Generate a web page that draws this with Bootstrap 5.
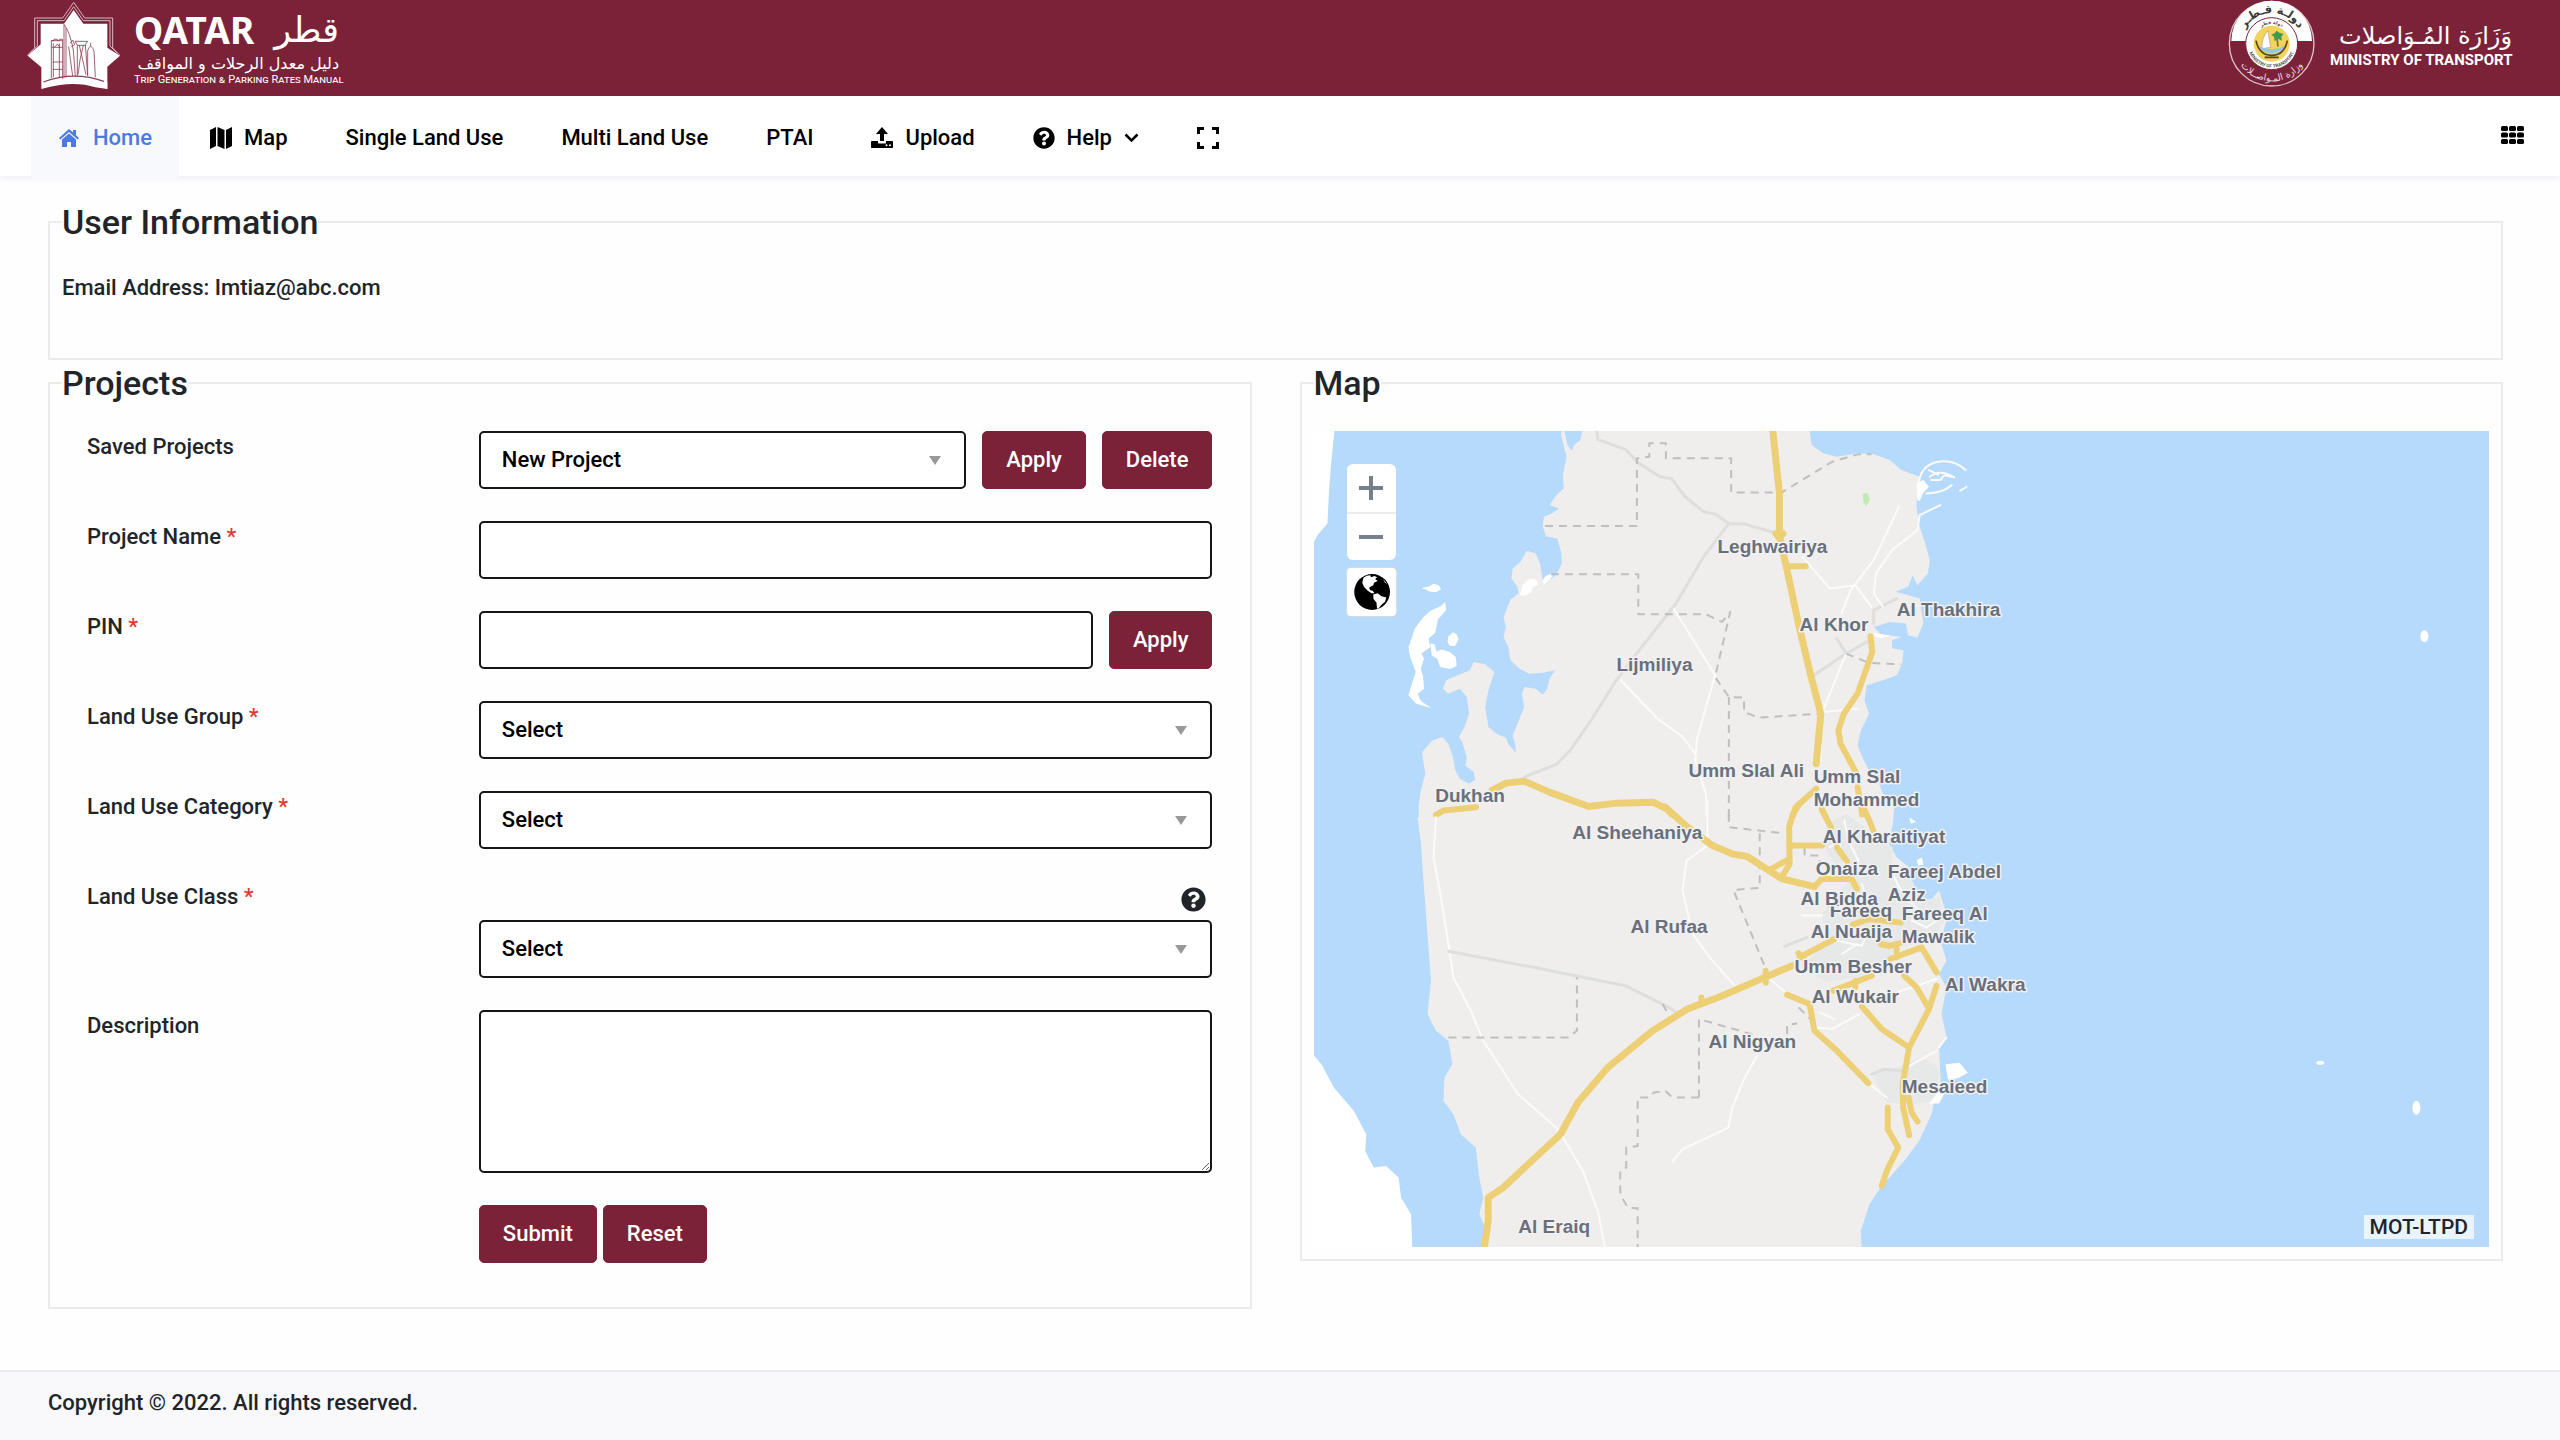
<!DOCTYPE html>
<html lang="en">
<head>
<meta charset="utf-8">
<meta name="viewport" content="width=device-width, initial-scale=1">
<title>Trip Generation &amp; Parking Rates Manual</title>
<link href="https://cdn.jsdelivr.net/npm/bootstrap@5.3.0/dist/css/bootstrap.min.css" rel="stylesheet">
<style>
:root{--maroon:#7b2239;--ink:#212529}
body{font-family:Roboto,"Liberation Sans",sans-serif;font-weight:500;font-size:22px;line-height:32px;color:var(--ink);background:#fefefe}
/* header */
.top-band{background:var(--maroon);height:96px;color:#fff;padding:0 48px 0 20px}
.brand-words{width:205px}
.brand-name{font-family:"Noto Sans","Open Sans",sans-serif;font-weight:700;font-size:37px;line-height:52px}
.brand-ar{font-family:"DejaVu Sans",sans-serif;font-weight:400;font-size:35px;line-height:52px}
.brand-sub-ar{font-family:"DejaVu Sans",sans-serif;font-weight:400;font-size:16px;line-height:16px;white-space:nowrap}
.brand-sub{font-variant:small-caps;font-weight:400;font-size:11px;line-height:16px;white-space:nowrap}
.ministry{margin-left:10px;width:182px;padding-top:20px}
.ministry-ar{font-family:"DejaVu Sans",sans-serif;font-weight:400;font-size:24px;line-height:32px;white-space:nowrap}
.ministry-en{font-weight:700;font-size:15px;line-height:16px;white-space:nowrap}
/* navigation */
.main-nav{height:80px;padding:0 36px 0 31px;background:#fff;box-shadow:0 2px 6px rgba(60,70,130,.09)}
.main-nav .nav{gap:3px}
.main-nav .nav-link{color:#000;padding:0 27px 0 28px;height:83px;display:flex;align-items:center;gap:12px}
.main-nav .nav-link svg{width:22px;height:22px;flex:none}
.main-nav .nav-link .chev{width:15px}
.main-nav .nav-link.active{color:#4b7be0;background:#f8f9fd}
.icon-btn{border:0;background:none;padding:0;display:flex}
.apps-btn{margin-top:30px}
/* framed sections */
main{padding:26px 57px 61px 48px}
.frame{border:2px solid #ebebeb;padding:28px 12px 12px}
.frame legend{float:none;width:auto;margin:0;font-size:34px;line-height:40px;font-weight:500}
.user-frame{padding-top:30px;padding-bottom:54px;margin-bottom:3px}
.two-up{--bs-gutter-x:48px}
.form-row-x{--bs-gutter-x:50px;margin:0 0 32px}
.req{color:#e0392f}
.form-control,.form-select,.btn{font-weight:500;font-size:22px;line-height:32px;height:58px;border-radius:5px}
.form-control,.form-select{border:2px solid #151515;color:#000;background-color:#fff}
.form-select{padding:0 50px 0 21px;background-size:12px 9px;background-position:right 23px center;
 background-image:url("data:image/svg+xml,%3Csvg xmlns='http://www.w3.org/2000/svg' viewBox='0 0 12 10' preserveAspectRatio='none'%3E%3Cpath d='M0 0h12L6 10z' fill='%23999'/%3E%3C/svg%3E")}
textarea.form-control{height:163px;resize:vertical}
.btn-maroon{--bs-btn-color:#fff;--bs-btn-bg:var(--maroon);--bs-btn-border-color:var(--maroon);--bs-btn-hover-color:#fff;--bs-btn-hover-bg:#651a2e;--bs-btn-hover-border-color:#651a2e;padding:0 23px;flex:none}
.tight{gap:16px}.tight2{gap:6px}
.help-line{height:39px;padding:6px 6px 0 0}
/* map */
.map-box{height:816px;background:#b6dafc;overflow:hidden}
.map-box>svg{display:block;width:100%;height:100%}
.map-box path{fill:none;vector-effect:non-scaling-stroke;stroke-linejoin:round;stroke-linecap:round}
.map-box .land{fill:#efeeed}
.map-box .blank{fill:#fff}
.map-box .park{fill:#c2e8b6}
.map-box .town{fill:#e7e8e8}
.map-box .hwy{stroke:#edcf76;stroke-width:6}
.map-box .trunk{stroke-width:7}
.map-box .lane{stroke:#fbfbfb;stroke-width:2}
.map-box .track{stroke:#dededf;stroke-width:3}
.map-box .border-x{stroke:#bfbfbf;stroke-width:2;stroke-dasharray:8 6;stroke-linecap:butt}
.map-box text{font-family:"Liberation Sans",Arial,sans-serif;font-weight:700;font-size:19px;fill:#69707c;stroke:#f1f1f1;stroke-width:3px;paint-order:stroke;stroke-linejoin:round}
.map-tools{position:absolute;left:33px;top:33px;width:49px}
.map-tools button{display:flex;align-items:center;justify-content:center;width:49px;height:48px;border:0;background:#fff}
.map-tools .globe-light{fill:#fff}
.zoom-set{border-radius:6px;overflow:hidden;margin-bottom:8px}
.zoom-set button+button{border-top:2px solid #ececec}
.globe-set{border-radius:4px;overflow:hidden;box-shadow:0 0 0 1px #d5dbe2}
.map-credit{position:absolute;right:15px;bottom:8px;background:rgba(255,255,255,.7);font-size:21px;line-height:24px;padding:0 6px}
footer{background:#f9f9fb;border-top:2px solid #e9ebf0;padding:15px 48px 22px}
</style>
</head>
<body class="d-flex flex-column min-vh-100">
<header class="top-band d-flex justify-content-between align-items-start">
  <div class="d-flex">
    <svg width="110" height="96" viewBox="0 0 330 288" fill="none" aria-hidden="true">
      <path d="M22 166 44 144V54H128L161 7 194 54H278V144L300 166" stroke="#d9b9c2" stroke-width="3"/>
      <path d="M30 160 52 138V62H132L161 20 190 62H270V138L292 160" stroke="#d9b9c2" stroke-width="3"/>
      <path d="M161 30 190 71H262V143L300 167 262 200V267L226 252Q161 225 98 252L64 267V202L23 167 62 133V71H132Z" fill="#fff"/>
      <path d="M161 238 Q205 238 262 267L226 262Q161 240 66 266L66 244Q110 228 161 228Q220 228 262 246V267" fill="#fff"/>
      <g stroke="#8b4055" stroke-width="2.5">
        <path d="M70 246Q160 212 252 244" stroke-width="4"/>
        <path d="M94 234V122H102V118H112V122H118V118H128V236M94 122H128M100 130V232M118 130V232M94 142H128M98 186H128M98 208H128M104 142 112 132 120 142"/>
        <path d="M132 232V73Q150 96 160 150L166 228M138 84V232M150 130l8-10 6 14-10 6M146 140 158 228"/>
        <path d="M165 124H203L196 134 203 226M165 124 172 136V228M172 136H196M178 136 198 224M190 136 180 180 174 224"/>
        <path d="M203 228V152Q206 142 212 138V128M212 138Q220 144 222 154L226 232"/>
      </g>
    </svg>
    <div class="brand-words ms-1 pt-1">
      <div class="d-flex justify-content-between"><span class="brand-name">QATAR</span><span class="brand-ar" lang="ar" dir="rtl">قطر</span></div>
      <div class="brand-sub-ar" lang="ar" dir="rtl">دليل معدل الرحلات و المواقف</div>
      <div class="brand-sub">Trip Generation &amp; Parking Rates Manual</div>
    </div>
  </div>
  <div class="d-flex">
    <svg width="100" height="96" viewBox="-16 0 300 288" aria-hidden="true">
      <defs>
        <path id="arcTop" d="M47 131A92 92 0 0 1 231 131"/>
        <path id="arcLow" d="M26 131A113 113 0 0 0 252 131"/>
        <path id="arcIn" d="M67 131A72 72 0 0 0 211 131"/>
        <path id="arcInTop" d="M80 131A59 59 0 0 1 198 131"/>
      </defs>
      <circle cx="139" cy="131" r="127" fill="#7b2239" stroke="#e0c5cc" stroke-width="4"/>
      <path d="M18 123A121 121 0 0 1 260 123Z" fill="#fff"/>
      <circle cx="139" cy="131" r="78" fill="#fff" stroke="#7b2239" stroke-width="3"/>
      <circle cx="139" cy="131" r="54" fill="#f2d35c"/>
      <path d="M110 146Q108 112 128 92L136 142Z" fill="#fff" stroke="#b98" stroke-width="2"/>
      <path d="M158 140 154 106" stroke="#8a6a35" stroke-width="5"/>
      <path d="M154 92l8 6 12 4-6 8 2 12-12-6-10 8-2-14-8-6 10-4z" fill="#3f9a4e"/>
      <path d="M100 138Q139 158 178 138Q168 160 139 160Q110 160 100 138Z" fill="#8ecbe0"/>
      <path d="M92 122Q102 168 142 166M186 122Q176 168 136 166M118 172H160" fill="none" stroke="#5a4326" stroke-width="5"/>
      <g font-family="DejaVu Sans, sans-serif" font-weight="700" text-anchor="middle">
        <text font-size="34" fill="#3a3a3a"><textPath href="#arcTop" startOffset="50%">دولـة قـطـر</textPath></text>
        <text font-size="28" fill="#f0dfe3" font-weight="400"><textPath href="#arcLow" startOffset="50%">وزارة المـواصــلات</textPath></text>
      </g>
      <g font-family="Roboto, sans-serif" font-weight="700" text-anchor="middle" fill="#555">
        <text font-size="14"><textPath href="#arcIn" startOffset="50%">MINISTRY OF TRANSPORT</textPath></text>
        <text font-size="14" font-family="DejaVu Sans, sans-serif"><textPath href="#arcInTop" startOffset="50%">دولة قطر</textPath></text>
      </g>
    </svg>
    <div class="ministry text-end">
      <div class="ministry-ar" lang="ar" dir="rtl">وَزَارَة المُـوَاصلات</div>
      <div class="ministry-en">MINISTRY OF TRANSPORT</div>
    </div>
  </div>
</header>

<nav class="main-nav d-flex justify-content-between align-items-start">
  <div class="nav">
    <a class="nav-link active" href="#"><svg viewBox="0 0 22 22" fill="currentColor" aria-hidden="true"><path d="M10 2 0 11l1.300 1.500L10 5l8.700 7.500L20 11l-3-2.700V3h-3v2.600zM10 6.500 3 12.500V20h5v-5h4v5h5v-7.500z"/></svg>Home</a>
    <a class="nav-link" href="#"><svg viewBox="0 0 22 22" fill="currentColor" aria-hidden="true"><path d="M0 3 6 0v19L0 22zM7.500 0l7 3v19l-7-3zM16 3l6-3v19l-6 3z"/></svg>Map</a>
    <a class="nav-link" href="#">Single Land Use</a>
    <a class="nav-link" href="#">Multi Land Use</a>
    <a class="nav-link" href="#">PTAI</a>
    <a class="nav-link" href="#"><svg viewBox="0 0 22 22" fill="currentColor" aria-hidden="true"><path d="M11 0l6 7h-4v7H9V7H5zM1 14h6v1.500c0 .6.400 1 1 1h6c.6 0 1-.4 1-1V14h6c.6 0 1 .4 1 1v5c0 .6-.4 1-1 1H1c-.6 0-1-.4-1-1v-5c0-.6.400-1 1-1zm13.500 4.200a1 1 0 1 0 2 0 1 1 0 0 0-2 0zm3.500 0a1 1 0 1 0 2 0 1 1 0 0 0-2 0z" fill-rule="evenodd"/></svg>Upload</a>
    <a class="nav-link" href="#"><svg viewBox="0 0 512 512" fill="currentColor" aria-hidden="true"><path d="M504 256c0 136.997-111.043 248-248 248S8 392.997 8 256C8 119.083 119.043 8 256 8s248 111.083 248 248zM262.655 90c-54.497 0-89.255 22.957-116.549 63.758-3.536 5.286-2.353 12.415 2.715 16.258l34.699 26.310c5.205 3.947 12.621 3.008 16.665-2.122 17.864-22.658 30.113-35.797 57.303-35.797 20.429 0 45.698 13.148 45.698 32.958 0 14.976-12.363 22.667-32.534 33.976C247.128 238.528 216 254.941 216 296v4c0 6.627 5.373 12 12 12h56c6.627 0 12-5.373 12-12v-1.333c0-28.462 83.186-29.647 83.186-106.667 0-58.002-60.165-102-116.531-102zM256 338c-25.365 0-46 20.635-46 46 0 25.364 20.635 46 46 46s46-20.636 46-46c0-25.365-20.635-46-46-46z"/></svg>Help<svg class="chev" viewBox="0 0 15 22" fill="none" stroke="currentColor" stroke-width="2.500" aria-hidden="true"><path d="M1.500 7.500l6 6 6-6"/></svg></a>
    <a class="nav-link" href="#" aria-label="Full screen"><svg viewBox="0 0 22 22" fill="none" stroke="currentColor" stroke-width="3" aria-hidden="true"><path d="M1.500 7V1.500H7M15 1.500h5.500V7M20.500 15v5.500H15M7 20.500H1.500V15"/></svg></a>
  </div>
  <button type="button" class="icon-btn apps-btn" aria-label="Applications"><svg width="23" height="18" viewBox="0 0 23 18" aria-hidden="true"><g><rect width="7" height="5" rx="1.500"/><rect x="8" width="7" height="5" rx="1.500"/><rect x="16" width="7" height="5" rx="1.500"/><rect y="6.500" width="7" height="5" rx="1.500"/><rect x="8" y="6.500" width="7" height="5" rx="1.500"/><rect x="16" y="6.500" width="7" height="5" rx="1.500"/><rect y="13" width="7" height="5" rx="1.500"/><rect x="8" y="13" width="7" height="5" rx="1.500"/><rect x="16" y="13" width="7" height="5" rx="1.500"/></g></svg></button>
</nav>

<main class="flex-grow-1">
  <fieldset class="frame user-frame">
    <legend>User Information</legend>
    <p class="m-0">Email Address: Imtiaz@abc.com</p>
  </fieldset>

  <div class="row two-up align-items-start">
    <div class="col-6">
      <form onsubmit="return false">
      <fieldset class="frame">
        <legend>Projects</legend>
        <div class="row form-row-x">
          <label class="col-4" for="saved">Saved Projects</label>
          <div class="col-8 d-flex tight"><select id="saved" class="form-select"><option>New Project</option></select><button type="button" class="btn btn-maroon">Apply</button><button type="button" class="btn btn-maroon">Delete</button></div>
        </div>
        <div class="row form-row-x">
          <label class="col-4" for="pname">Project Name <span class="req">*</span></label>
          <div class="col-8"><input id="pname" type="text" class="form-control"></div>
        </div>
        <div class="row form-row-x">
          <label class="col-4" for="pin">PIN <span class="req">*</span></label>
          <div class="col-8 d-flex tight"><input id="pin" type="text" class="form-control"><button type="button" class="btn btn-maroon">Apply</button></div>
        </div>
        <div class="row form-row-x">
          <label class="col-4" for="lgroup">Land Use Group <span class="req">*</span></label>
          <div class="col-8"><select id="lgroup" class="form-select"><option>Select</option></select></div>
        </div>
        <div class="row form-row-x">
          <label class="col-4" for="lcat">Land Use Category <span class="req">*</span></label>
          <div class="col-8"><select id="lcat" class="form-select"><option>Select</option></select></div>
        </div>
        <div class="row form-row-x">
          <label class="col-4" for="lclass">Land Use Class <span class="req">*</span></label>
          <div class="col-8">
            <div class="help-line d-flex justify-content-end align-items-start"><button type="button" class="icon-btn" aria-label="Help on land use class"><svg width="25" height="25" viewBox="0 0 512 512" fill="#212529" aria-hidden="true"><path d="M504 256c0 136.997-111.043 248-248 248S8 392.997 8 256C8 119.083 119.043 8 256 8s248 111.083 248 248zM262.655 90c-54.497 0-89.255 22.957-116.549 63.758-3.536 5.286-2.353 12.415 2.715 16.258l34.699 26.310c5.205 3.947 12.621 3.008 16.665-2.122 17.864-22.658 30.113-35.797 57.303-35.797 20.429 0 45.698 13.148 45.698 32.958 0 14.976-12.363 22.667-32.534 33.976C247.128 238.528 216 254.941 216 296v4c0 6.627 5.373 12 12 12h56c6.627 0 12-5.373 12-12v-1.333c0-28.462 83.186-29.647 83.186-106.667 0-58.002-60.165-102-116.531-102zM256 338c-25.365 0-46 20.635-46 46 0 25.364 20.635 46 46 46s46-20.636 46-46c0-25.365-20.635-46-46-46z"/></svg></button></div>
            <select id="lclass" class="form-select"><option>Select</option></select>
          </div>
        </div>
        <div class="row form-row-x">
          <label class="col-4" for="descr">Description</label>
          <div class="col-8 d-flex"><textarea id="descr" class="form-control"></textarea></div>
        </div>
        <div class="row form-row-x">
          <div class="col-8 offset-4 d-flex tight2"><button type="submit" class="btn btn-maroon">Submit</button><button type="reset" class="btn btn-maroon">Reset</button></div>
        </div>
      </fieldset>
      </form>
    </div>

    <div class="col-6">
      <fieldset class="frame">
        <legend>Map</legend>
        <div class="map-box position-relative">
          <svg viewBox="1315 431 1174 816" preserveAspectRatio="xMinYMin slice" role="img" aria-label="Map of Qatar">
            <!-- northern sheet -->
            <g transform="translate(1300 360) scale(.45918 .33333)">
              <path class="blank" d="M20 200H78L70 310 65 400 62 490 40 525 31 550H20Z"/>
              <path class="land" d="M618 200 612 240 598 255 593 272 584 255 575 200 570 225 577 265 582 290 574 345 576 385 560 405 545 435 566 445 550 460 533 470 530 498 537 528 562 535 570 575 572 610 560 642 550 655 530 660 524 610 515 580 495 572 482 605 465 625 462 655 475 680 478 700 460 718 445 770 450 800 445 830 455 860 460 900 480 925 500 940 530 937 557 930 545 955 540 985 530 1003 515 985 490 980 485 1000 490 1040 475 1090 465 1125 470 1150 472 1178 455 1150 450 1132 430 1120 412 1100 405 1040 412 990 425 935 405 912 380 905 372 930 345 945 320 960 313 985 325 1000 350 985 365 1010 370 1060 360 1100 348 1130 355 1145 365 1190 362 1215 380 1235 383 1258 370 1270 350 1255 340 1230 335 1190 325 1150 312 1130 290 1140 268 1175 270 1200 275 1240 265 1290 260 1340 262 1400H1290L1295 1340 1270 1300 1262 1270 1240 1230 1225 1190 1215 1155 1222 1110 1240 1060 1230 1020 1235 975 1270 960 1300 945 1312 910 1315 870 1290 865 1290 840 1310 830 1265 822 1250 800 1285 785 1320 790 1325 825 1345 832 1358 790 1350 715 1325 705 1298 695 1325 680 1335 645 1345 675 1368 640 1372 600 1360 540 1350 500 1343 440 1345 380 1350 350 1310 330 1285 300 1250 283 1215 280 1170 290 1140 280 1115 255 1110 200Z"/>
              <path class="blank" d="M318 725 308 738 285 752 270 772 252 805 245 835 238 862 242 890 254 935 246 968 238 1005 255 1030 288 1043 265 1022 258 1000 272 985 270 950 265 925 272 895 266 880 285 862 282 835 296 818 300 795 302 778 320 750Z M266 684l18-6 8-7 12 4 5 12-10 9-16-2-6-5z M325 828l10-12 8 6 4 16-8 20-12-2-4-14z M285 850l10 2 4 22 12-6 18 8 12 14 2 26-14 10-22-6-6-24-12-10z"/>
              <path class="blank" d="M480 705l6-30 16-20 14 4 4 14-12 8-2 14-14 12z M530 660l6-12 12-8 4 8-10 12-8 14z M1345 420l-2-50 15-10 12 20-12 18-8 25z M1250 818l35 8-20 8-15-6z"/>
              <path class="lane" d="M1348 370Q1352 315 1390 305 1425 298 1450 330M1372 350Q1395 325 1425 352M1365 400Q1400 400 1420 375M1375 360h20l8-14 16 4M1370 330l20 14M1438 392l14-12"/>
              <path class="park" d="M1226 402l10-4 6 18-8 24-6-14z"/>
              <path class="track" d="M648 213 650 238 710 268 740 310 785 350 810 355 840 410 880 455 905 462 935 490 970 492 1040 520M935 490 880 590 820 730 740 870 690 960 640 1070 590 1170 560 1212 490 1250M1170 835 1190 880 1235 845M1190 880 1120 945M1300 715 1250 750 1250 790"/>
              <path class="lane" d="M815 745 905 945 865 1140 862 1200 885 1300 887 1400M700 960 780 1075 835 1130 862 1180M1095 590 1155 685 1210 675 1245 740M1305 440 1250 600 1200 690 1180 760M1395 435 1350 465 1345 510 1290 570 1255 640 1250 700 1270 740M1190 880 1140 1050M1140 1055 1215 1045M1135 1065 1135 1200"/>
              <path class="border-x" d="M535 498H735V295L762 290V250H798V295H940V397H1050L1160 305 1215 283H1245M548 642H738V762H885L920 785 938 755 905 950 935 1010 968 1012V1055L1000 1072 1130 1060M935 1010V1400M1190 880 1240 908 1310 912"/>
              <path class="hwy" d="M1060 618H1102M1243 828 1247 875 1215 1000 1185 1060 1173 1110 1178 1150 1213 1240M1215 1280 1230 1400M298 1363 315 1350 385 1340M1125 1285 1080 1340 1068 1400M1137 1345 1155 1395M1036 520 1045 535 1054 520"/>
              <path class="hwy trunk" d="M1030 205 1045 400 1045 530 1060 620 1088 800 1113 945 1135 1060 1125 1210M420 1290 450 1268 490 1262 545 1295 630 1338 690 1328 770 1325 800 1345 835 1395"/>
            </g>
            <!-- southern sheet -->
            <g transform="translate(1300 800) scale(.49745 .33333)">
              <path class="land" d="M238 50 245 130 250 240 258 400 265 540 258 640 275 690 300 720 308 790 292 830 290 900 310 940 325 1000 355 1040 362 1130 370 1190 362 1240 378 1290 370 1360H1130L1128 1290 1145 1210 1170 1155 1215 1080 1245 1020 1270 940 1275 905 1290 890 1285 740 1300 710 1290 640 1300 560 1285 520 1300 480 1288 420 1302 350 1285 270 1265 305 1230 260 1225 200 1200 170 1185 130 1194 50Z"/>
              <path class="blank" d="M28 760 45 790 70 860 110 930 135 1000 133 1050 150 1100 175 1095 200 1130 205 1190 225 1240 228 1360H20V760Z"/>
              <path class="town" d="M1060 70 1100 40 1160 110 1192 140 1190 190 1225 220 1250 300 1285 290 1295 360 1270 420 1200 440 1150 520 1060 545 1010 500 1060 420 1050 340 1100 250 1080 200 1050 130ZM1150 820 1200 800 1250 770 1285 800 1285 900 1230 910 1180 905Z"/>
              <path class="blank" d="M1298 790l28-4 17 30-20 16-20 4zM1240 180l10-10 4 22-10 4zM1225 50l14 14-10 6z M1285 870l10 10-10 28-20 0z"/>
              <path class="lane" d="M275 50 270 170 285 290 300 430 310 530 345 630 370 720 440 880 520 985 570 1110 600 1230 617 1360M820 0V135L778 180 770 270 790 400 830 480 875 555M945 535 985 585M920 765 895 830 870 920 862 980 770 1045 750 1082M1040 680 1070 685 1125 640M1045 635l30 20M1065 140l20-10 10 60M1095 60l8 60 20 60M1130 250l10 50M1080 420l50 15 10-35M1090 460l30-30M1200 575 1280 535M1150 855 1180 890M1285 740l15-30M1220 800l60-50M1010 345h40M1185 200l20 60 20 40 40 60M1230 360l30 20 20-20"/>
              <path class="track" d="M300 452 460 497 655 555 730 610 755 632M975 437 1020 410M1150 820 1175 805 1210 810"/>
              <path class="border-x" d="M863 40V80L970 98M925 98V262L872 268 940 515M300 710H540L558 690V530M803 890V655L920 705M803 890H750L735 870 712 875 705 890H680V1035L657 1040V1100L645 1110V1180L660 1220 680 1222V1360M1015 140V165H1045V200M980 700V672L1000 668M1003 620 1030 660M730 610 745 650"/>
              <path class="hwy" d="M1035 258 1050 235 1110 235 1120 265M1005 10 992 40 984 80 985 190 970 228M985 175 948 205M985 135H1050M1080 140 1100 183M1050 28 1068 80M1133 20 1145 60 1153 90"/>
              <path class="hwy trunk" d="M735 20 780 80 830 135 870 160 900 168 970 235 1035 258M370 1360 380 1260 380 1190 410 1160 460 1090 525 1000 560 905 620 800 710 690 780 625 850 585 935 530 990 495"/>
              <path class="hwy" d="M1005 470 1075 415M1112 372 1145 355 1208 366M1168 430 1185 436 1205 428M1187 475 1250 440 1280 515M1072 570 1150 525M1215 525 1240 560 1265 625 1225 740 1212 850 1213 920 1225 1003M1280 555 1265 625M1130 617 1170 685 1225 740M1117 540v20M980 582 1025 610 1035 690 1080 750 1143 847M1224 890 1230 935 1242 962M1182 920 1182 985 1203 1040 1180 1110 1170 1155M937 510v36M1200 445v25M808 590v20M1003 458l10 15"/>
            </g>
            <g fill="#fff"><ellipse cx="2424" cy="636" rx="4" ry="6"/><ellipse cx="2320" cy="1062" rx="4" ry="2"/><ellipse cx="2416" cy="1107" rx="4" ry="7"/></g>
            <g>
              <text x="1718" y="553">Leghwairiya</text><text x="1897" y="616">Al Thakhira</text><text x="1800" y="631">Al Khor</text><text x="1617" y="671">Lijmiliya</text>
              <text x="1689" y="777">Umm Slal Ali</text><text x="1814" y="783">Umm Slal</text><text x="1814" y="806">Mohammed</text><text x="1436" y="802">Dukhan</text>
              <text x="1573" y="838">Al Sheehaniya</text><text x="1823" y="842">Al Kharaitiyat</text><text x="1816" y="874">Onaiza</text><text x="1888" y="877">Fareej Abdel</text>
              <text x="1888" y="900">Aziz</text><text x="1830" y="916">Fareeq</text><text x="1801" y="904">Al Bidda</text><text x="1902" y="919">Fareeq Al</text><text x="1811" y="937">Al Nuaija</text>
              <text x="1902" y="942">Mawalik</text><text x="1631" y="932">Al Rufaa</text><text x="1795" y="972">Umm Besher</text><text x="1945" y="990">Al Wakra</text><text x="1812" y="1002">Al Wukair</text>
              <text x="1709" y="1047">Al Nigyan</text><text x="1902" y="1092">Mesaieed</text><text x="1519" y="1232">Al Eraiq</text>
            </g>
          </svg>
          <div class="map-tools">
            <div class="zoom-set">
              <button type="button" aria-label="Zoom in"><svg width="24" height="24" stroke="#76808c" stroke-width="4" aria-hidden="true"><path d="M0 12H24M12 0V24"/></svg></button>
              <button type="button" aria-label="Zoom out"><svg width="24" height="24" stroke="#76808c" stroke-width="4" aria-hidden="true"><path d="M0 12H24"/></svg></button>
            </div>
            <div class="globe-set"><button type="button" aria-label="Full extent"><svg width="40" height="40" viewBox="0 0 120 120" aria-hidden="true"><circle cx="62" cy="60" r="58"/><path class="globe-light" d="M34 14Q44 6 56 6L58 12 70 8 78 12 72 18 80 24 68 30 66 38 58 42 52 46 56 54 64 56 70 64 60 64 48 56 36 44 30 30Z"/><path class="globe-light" d="M66 68 80 64 92 74 108 78 104 92 94 100 84 112 78 114 76 94 66 82Z"/><path class="globe-light" d="M98 18 110 34 104 30Z"/></svg></button></div>
          </div>
          <div class="map-credit">MOT-LTPD</div>
        </div>
      </fieldset>
    </div>
  </div>
</main>

<footer>Copyright © 2022. All rights reserved.</footer>
<script src="https://cdn.jsdelivr.net/npm/bootstrap@5.3.0/dist/js/bootstrap.bundle.min.js"></script>
</body>
</html>
